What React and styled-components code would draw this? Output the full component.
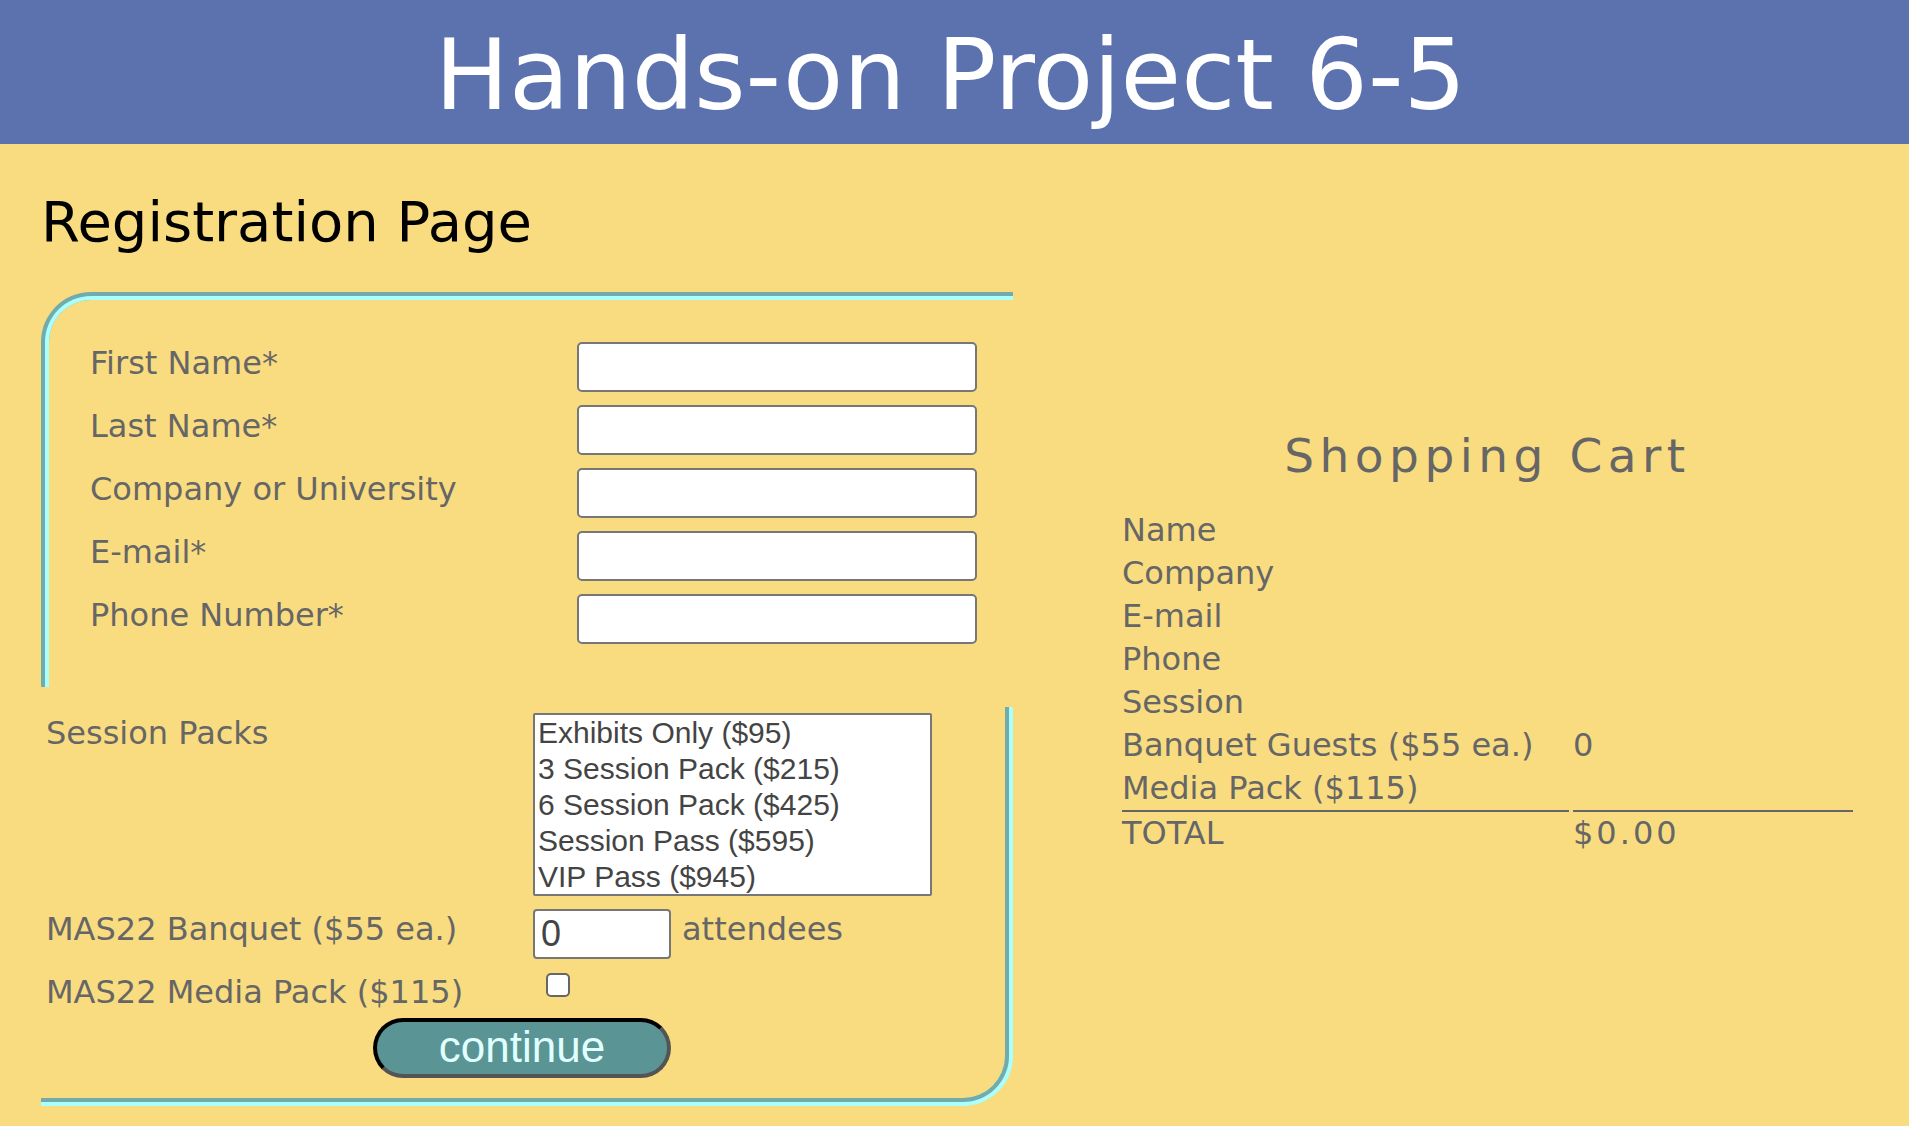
import React from 'react';
import styled, { createGlobalStyle } from 'styled-components';

const GlobalStyle = createGlobalStyle`
  html, body {
    margin: 0;
    padding: 0;
    background: #ffffff;
    font-family: "DejaVu Sans", Verdana, sans-serif;
  }
`;

const Header = styled.header`
  background: #5b72ae;
  height: 144px;
  box-sizing: border-box;
  padding: 18px 8px 0 0;
`;

const Heading = styled.h1`
  margin: 0;
  color: #ffffff;
  font-size: 98.5px;
  font-weight: normal;
  text-align: center;
  line-height: normal;
`;

const Main = styled.main`
  background: #f9dc80;
  display: flex;
  align-items: flex-start;
  padding: 45px 0 20px 41px;
`;

const Article = styled.article`
  width: 972px;
  flex: none;
`;

const PageTitle = styled.h2`
  margin: 0 0 38px;
  font-size: 56px;
  font-weight: normal;
  line-height: normal;
  color: #000000;
`;

const Fieldset = styled.fieldset`
  margin: 0;
  min-width: 0;
  box-sizing: border-box;
  width: 972px;
  border: none;
`;

const ContactSet = styled(Fieldset)`
  padding: 42px 0 43px 41px;
  border-top: 8px groove #aaffff;
  border-left: 8px groove #aaffff;
  border-top-left-radius: 50px;
`;

const OrderSet = styled(Fieldset)`
  margin-top: 20px;
  padding: 6px 0 20px 5px;
  border-right: 8px groove #aaffff;
  border-bottom: 8px groove #aaffff;
  border-bottom-right-radius: 50px;
`;

const Grid = styled.div`
  display: grid;
  grid-template-columns: 487px auto;
  row-gap: 13px;
  align-items: start;
`;

const Label = styled.label`
  color: #666666;
  font-size: 32px;
  line-height: normal;
  padding-top: ${({ $offset }) => $offset}px;
`;

const TextField = styled.input`
  box-sizing: border-box;
  width: 400px;
  height: 50px;
  margin: 0;
  border: 2px solid #777777;
  border-radius: 5px;
  background: #ffffff;
  font-family: "DejaVu Sans", Verdana, sans-serif;
  font-size: 28px;
  padding: 0 8px;
`;

const Control = styled.div`
  display: flex;
  align-items: flex-start;
  gap: 11px;
`;

const SessionList = styled.select`
  box-sizing: border-box;
  width: 399px;
  height: 183px;
  margin: 0;
  padding: 1px 0;
  border: 2px solid #777777;
  border-radius: 2px;
  background: #ffffff;
  color: #444444;
  font-family: "Liberation Sans", Arial, sans-serif;
  font-size: 30px;
  overflow: hidden;
  outline: none;

  option {
    padding: 0 3px;
  }
`;

const CountField = styled.input`
  box-sizing: border-box;
  width: 138px;
  height: 50px;
  margin: 0;
  padding: 0 6px;
  border: 2px solid #777777;
  border-radius: 4px;
  background: #ffffff;
  color: #444444;
  font-family: "Liberation Sans", Arial, sans-serif;
  font-size: 36px;
  -moz-appearance: textfield;

  &::-webkit-inner-spin-button,
  &::-webkit-outer-spin-button {
    -webkit-appearance: none;
    margin: 0;
  }
`;

const Unit = styled.span`
  color: #666666;
  font-size: 32px;
  line-height: normal;
  padding-top: 1px;
`;

const Check = styled.input`
  appearance: none;
  box-sizing: border-box;
  width: 24px;
  height: 24px;
  margin: 1px 0 0 13px;
  border: 2px solid #666666;
  border-radius: 5px;
  background: #ffffff;
`;

const ButtonRow = styled.div`
  display: flex;
  justify-content: center;
  margin-top: 7px;
  padding-right: 7px;
`;

const ContinueButton = styled.button`
  box-sizing: border-box;
  width: 298px;
  height: 60px;
  border: 4px inset #000000;
  border-radius: 30px;
  background: #5a9494;
  color: #e0ffff;
  font-family: "Liberation Sans", Arial, sans-serif;
  font-size: 44px;
  line-height: 1;
  padding: 0 0 2px;
  cursor: pointer;
`;

const Aside = styled.aside`
  margin-left: 105px;
  width: 739px;
  padding-top: 239px;
  flex: none;
`;

const CartTitle = styled.h2`
  margin: 0 0 26px;
  text-align: center;
  color: #666666;
  font-size: 47px;
  font-weight: normal;
  letter-spacing: 5.5px;
  line-height: normal;
`;

const CartTable = styled.table`
  border-collapse: separate;
  border-spacing: 4px 0;
  color: #666666;
  font-size: 32px;
  line-height: 37px;
`;

const Cell = styled.td`
  padding: 3px 0;
  width: ${({ $wide }) => ($wide ? '447px' : '280px')};
  letter-spacing: ${({ $spaced }) => ($spaced ? '3px' : 'normal')};
  border-bottom: ${({ $rule }) => ($rule ? '2px solid #666666' : 'none')};
  vertical-align: top;
  white-space: nowrap;
`;

const contactFields = [
  { id: 'fname', label: 'First Name*' },
  { id: 'lname', label: 'Last Name*' },
  { id: 'company', label: 'Company or University' },
  { id: 'email', label: 'E-mail*' },
  { id: 'phone', label: 'Phone Number*' },
];

const sessions = [
  'Exhibits Only ($95)',
  '3 Session Pack ($215)',
  '6 Session Pack ($425)',
  'Session Pass ($595)',
  'VIP Pass ($945)',
];

const cartRows = [
  ['Name', ''],
  ['Company', ''],
  ['E-mail', ''],
  ['Phone', ''],
  ['Session', ''],
  ['Banquet Guests ($55 ea.)', '0'],
  ['Media Pack ($115)', ''],
];

export default function App() {
  return (
    <>
      <GlobalStyle />
      <Header>
        <Heading>Hands-on Project 6-5</Heading>
      </Header>
      <Main>
        <Article>
          <PageTitle>Registration Page</PageTitle>
          <form onSubmit={(e) => e.preventDefault()}>
            <ContactSet>
              <Grid>
                {contactFields.map((f) => (
                  <React.Fragment key={f.id}>
                    <Label htmlFor={f.id} $offset={2}>{f.label}</Label>
                    <TextField id={f.id} type="text" />
                  </React.Fragment>
                ))}
              </Grid>
            </ContactSet>
            <OrderSet>
              <Grid>
                <Label htmlFor="session" $offset={1}>Session Packs</Label>
                <SessionList id="session" size={5}>
                  {sessions.map((s) => (
                    <option key={s}>{s}</option>
                  ))}
                </SessionList>

                <Label htmlFor="banquet" $offset={1}>MAS22 Banquet ($55 ea.)</Label>
                <Control>
                  <CountField id="banquet" type="number" defaultValue={0} min={0} />
                  <Unit>attendees</Unit>
                </Control>

                <Label htmlFor="media" $offset={1}>MAS22 Media Pack ($115)</Label>
                <Control>
                  <Check id="media" type="checkbox" />
                </Control>
              </Grid>
              <ButtonRow>
                <ContinueButton type="submit">continue</ContinueButton>
              </ButtonRow>
            </OrderSet>
          </form>
        </Article>
        <Aside>
          <CartTitle>Shopping Cart</CartTitle>
          <CartTable>
            <tbody>
              {cartRows.map(([label, value], i) => {
                const last = i === cartRows.length - 1;
                return (
                  <tr key={label}>
                    <Cell $wide $rule={last}>{label}</Cell>
                    <Cell $rule={last}>{value}</Cell>
                  </tr>
                );
              })}
              <tr>
                <Cell $wide>TOTAL</Cell>
                <Cell $spaced>$0.00</Cell>
              </tr>
            </tbody>
          </CartTable>
        </Aside>
      </Main>
    </>
  );
}
